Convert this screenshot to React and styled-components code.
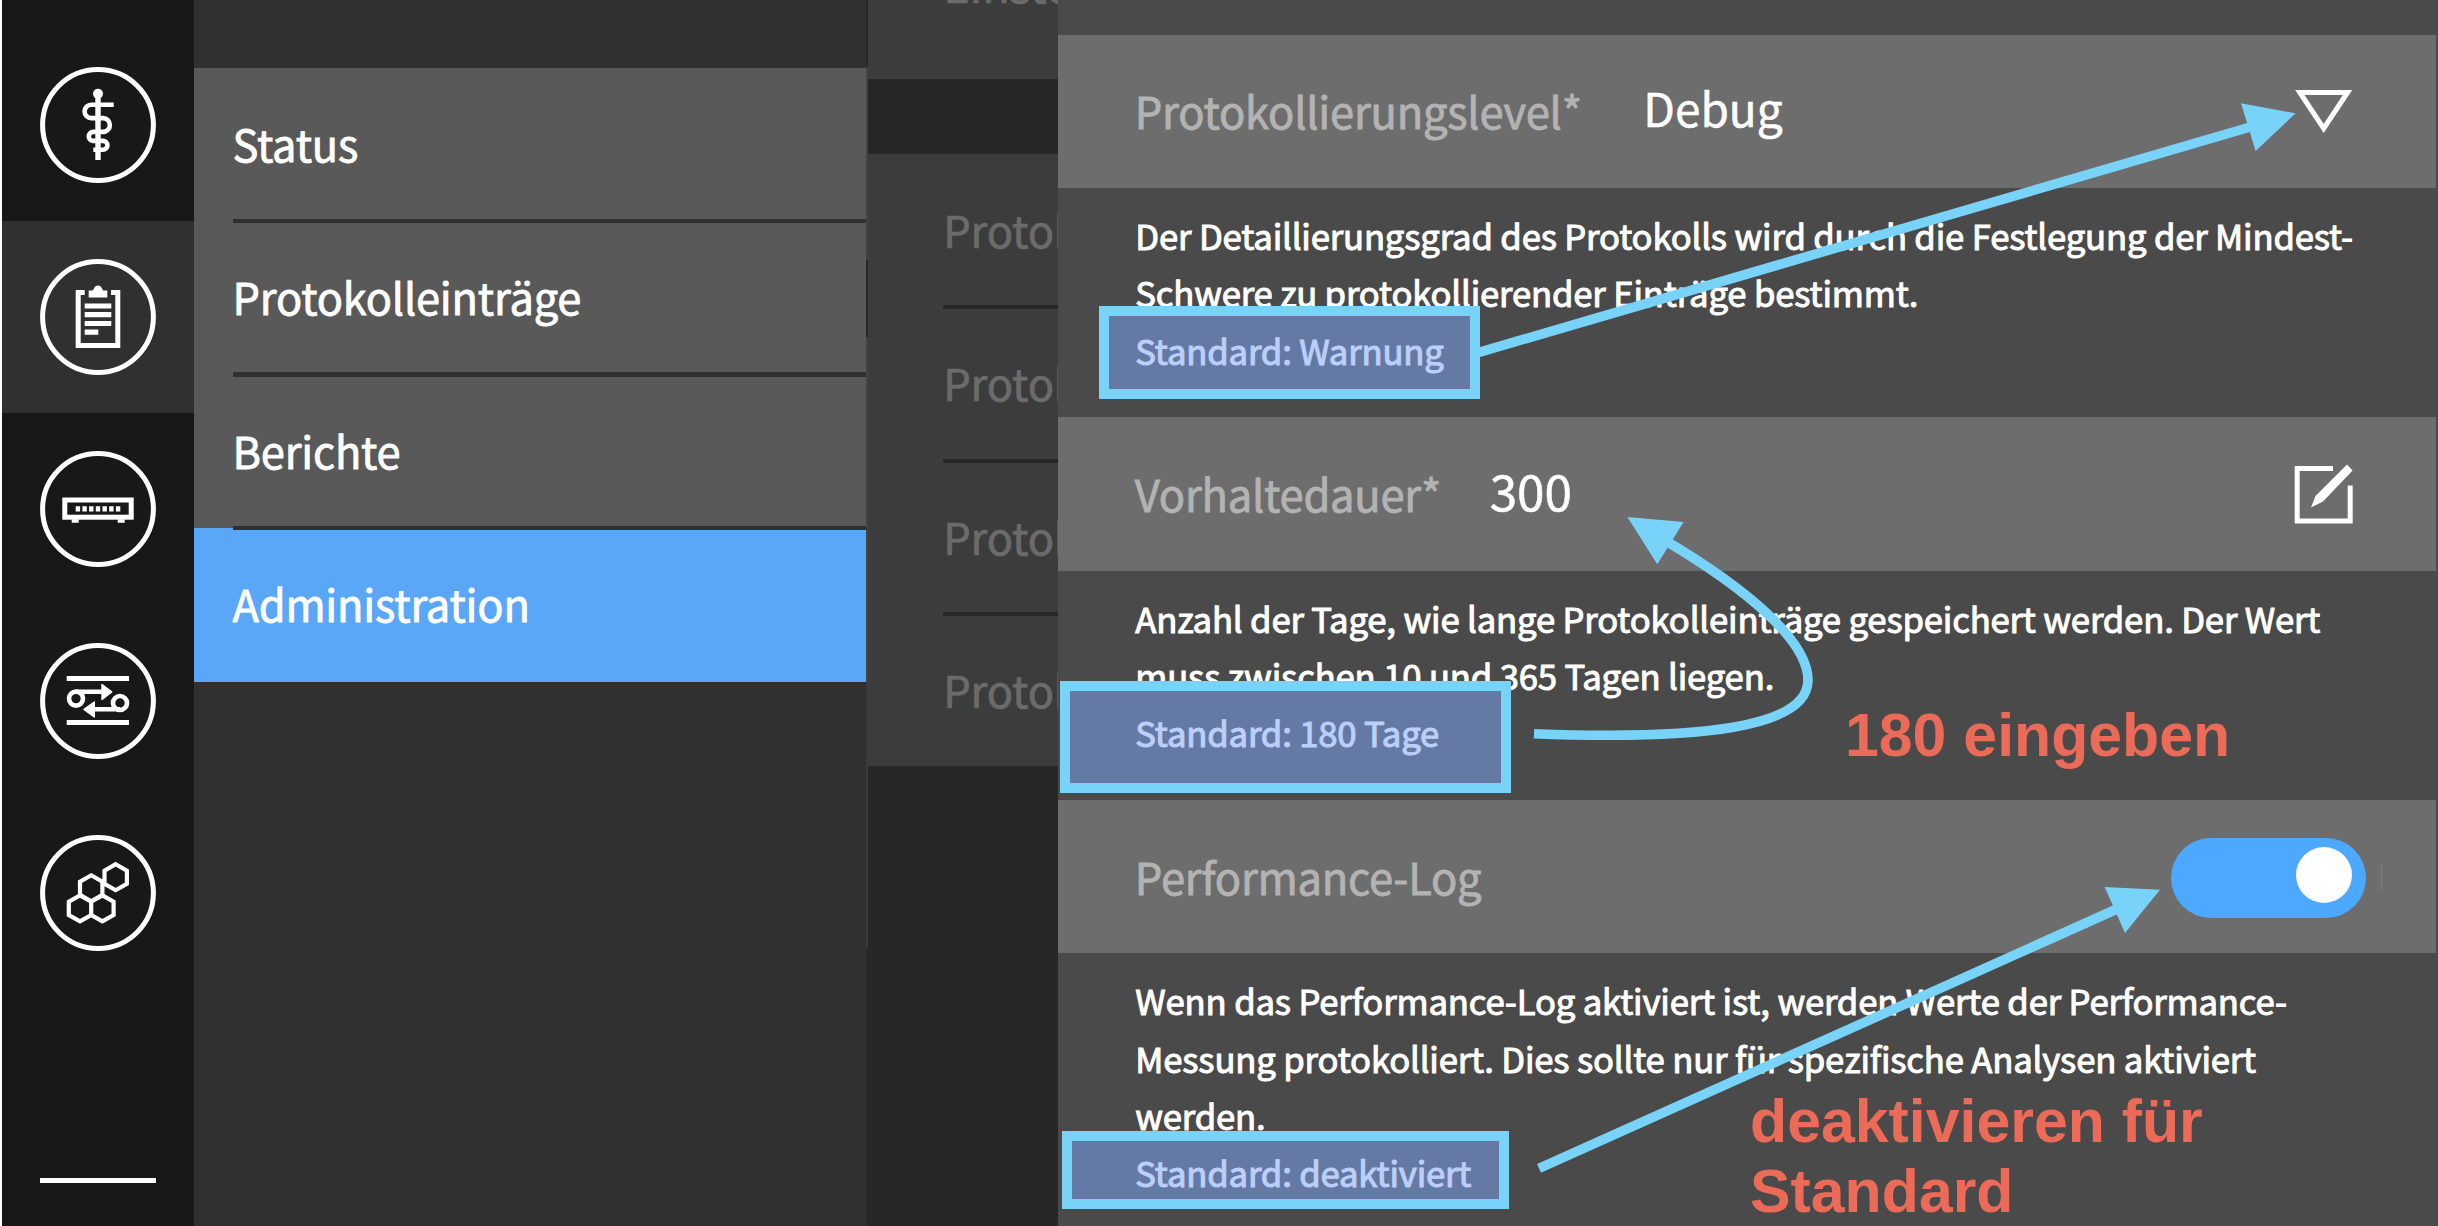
import React from "react";
import styled, { createGlobalStyle } from "styled-components";

const GlobalStyle = createGlobalStyle`
  *, *::before, *::after { box-sizing: border-box; }
  body { margin: 0; background: #fff; }
`;

const font = `"Noto Sans CJK JP", "Noto Sans CJK SC", "Noto Sans", sans-serif`;
const sky = "#79d3f9";

const Screen = styled.div`
  position: relative;
  display: flex;
  width: 2438px;
  height: 1226px;
  padding-left: 2px;
  overflow: hidden;
  background: #fff;
  font-family: ${font};
`;

const Rail = styled.nav`
  flex: none;
  display: flex;
  flex-direction: column;
  align-items: stretch;
  width: 192px;
  padding-top: 29.6px;
  background: #181818;
`;

const RailButton = styled.div`
  flex: none;
  display: flex;
  align-items: center;
  justify-content: center;
  height: 191.8px;
  background: ${(p) => (p.$active ? "#303030" : "transparent")};
`;

const RailIcon = styled.svg`
  display: block;
  width: 116px;
  height: 116px;
  fill: none;
  stroke: #fff;
  stroke-width: 4.6;
`;

const RailRule = styled.div`
  width: 116px;
  height: 5px;
  margin: 189.4px auto 0;
  background: #fff;
`;

const Menu = styled.aside`
  flex: none;
  width: 671.5px;
  padding-top: 67.5px;
  background: #303030;
`;

const MenuItem = styled.div`
  position: relative;
  height: 153.5px;
  padding: 0 0 0 38.5px;
  background: ${(p) => (p.$active ? "#5aa7f7" : "#595959")};
  color: #fff;
  font-size: 43.4px;
  line-height: 151px;
  letter-spacing: -0.2px;
  -webkit-text-stroke: 0.8px #fff;

  &:not(:first-child)::before {
    content: "";
    position: absolute;
    left: 38.5px;
    right: 0;
    top: -2.3px;
    height: 4.6px;
    background: #303030;
  }
`;

const Gutter = styled.div`
  flex: none;
  width: 2.8px;
  background: linear-gradient(#272727 0 67px, #434343 67px 260px, #272727 260px 337px, #434343 337px 682px, #3a3a3a 682px 948px, #272727 948px);
`;

const Backdrop = styled.section`
  flex: none;
  width: 190px;
  background: #272727;
  overflow: hidden;
`;

const BackdropTitle = styled.div`
  display: flow-root;
  height: 78.5px;
  padding-left: 75px;
  background: #3c3c3c;
  color: #6b6b6b;
  font-size: 45px;
  line-height: 66px;
  white-space: nowrap;
  -webkit-text-stroke: 0.7px #6b6b6b;

  span {
    display: block;
    margin-top: -48.6px;
  }
`;

const BackdropList = styled.div`
  margin-top: 75.5px;
  height: 612px;
  padding-left: 75px;
  background: #3c3c3c;
`;

const BackdropRow = styled.div`
  position: relative;
  height: 153.4px;
  color: #6b6b6b;
  font-size: 43.5px;
  line-height: 152px;
  letter-spacing: -0.22px;
  white-space: nowrap;
  -webkit-text-stroke: 0.7px #6b6b6b;

  &:not(:first-child)::before {
    content: "";
    position: absolute;
    left: 0;
    right: 0;
    top: -2px;
    height: 4px;
    background: #272727;
  }
`;

const Panel = styled.main`
  flex: 1;
  min-width: 0;
  padding: 34.7px 2px 0 0;
  background: #4a4a4a;
`;

const SettingHead = styled.header`
  display: flex;
  align-items: center;
  height: 153.4px;
  padding: 0 82px 0 76.5px;
  background: #6d6d6d;
`;

const Label = styled.div`
  color: #b3b3b3;
  font-size: 43.5px;
  line-height: 64px;
  letter-spacing: -0.25px;
  -webkit-text-stroke: 0.8px #b3b3b3;
  white-space: nowrap;
`;

const Value = styled.div`
  flex: 1;
  margin-left: ${(p) => p.$gap}px;
  color: #fff;
  font-size: ${(p) => p.$size}px;
  line-height: ${(p) => p.$line}px;
  height: 153.4px;
  white-space: nowrap;
  -webkit-text-stroke: 0.5px #fff;
`;

const Help = styled.div`
  height: 229.3px;
  padding: 18.8px 0 0 77px;
  color: #fff;
  font-size: 34.7px;
  line-height: 57.4px;
  letter-spacing: -0.18px;
  -webkit-text-stroke: 1px #fff;
`;

const HelpLine = styled.div`
  white-space: nowrap;
`;

const HeadIcon = styled.svg`
  flex: none;
  display: block;
  width: 60px;
  height: 60px;
`;

const Toggle = styled.div`
  flex: none;
  width: 195px;
  height: 80px;
  margin: 2px -12px 0 auto;
  padding: 9px 14px 0 0;
  display: flex;
  justify-content: flex-end;
  border-radius: 40px;
  background: #4da8ff;
`;

const Knob = styled.div`
  width: 56px;
  height: 56px;
  border-radius: 50%;
  background: #fff;
`;

const Sliver = styled.i`
  width: 1px;
  height: 26px;
  margin: 0 -28px 0 27px;
  background: #5a8fc6;
  opacity: 0.8;
`;

const Marker = styled.div`
  position: absolute;
  left: ${(p) => p.$x}px;
  top: ${(p) => p.$y}px;
  width: ${(p) => p.$w}px;
  height: ${(p) => p.$h}px;
  background: rgba(127, 164, 248, 0.53);
  background-clip: padding-box;
  border: 10px solid ${sky};
`;

const Arrows = styled.svg`
  position: absolute;
  left: 0;
  top: 0;
  width: 2438px;
  height: 1226px;
  pointer-events: none;
`;

const Note = styled.div`
  position: absolute;
  left: ${(p) => p.$x}px;
  top: ${(p) => p.$y}px;
  color: #ec6b58;
  font: bold 60.8px/70px "Liberation Sans", Arial, sans-serif;
  white-space: nowrap;
`;

const Ring = () => <circle cx="58" cy="58" r="55.4" strokeWidth="5" />;

const hex = (x, y) =>
  `M${x} ${y - 13}L${x + 11.2} ${y - 6.6}V${y + 6.6}L${x} ${y + 13}L${x - 11.2} ${y + 6.6}V${y - 6.6}Z`;

const StaffIcon = () => (
  <RailIcon viewBox="0 0 116 116">
    <Ring />
    <circle cx="58" cy="26.7" r="5" fill="#fff" stroke="none" />
    <path d="M58 27V93" strokeWidth="5.4" />
    <path d="M73.7 37.7H51.3a6.7 6.7 0 0 0 0 13.4H63a6.9 6.9 0 0 1 0 13.8H53.3a4.5 4.5 0 0 0 0 9H63a4.4 4.4 0 0 1 0 8.8H53.3" strokeWidth="4.6" />
  </RailIcon>
);

const ClipboardIcon = () => (
  <RailIcon viewBox="0 0 116 116">
    <Ring />
    <path d="M44.7 33.4H38.2V86.4H77.8V33.4H71" strokeWidth="5" />
    <path d="M48.7 38.5V31.5H52.5C54 31 54 26.6 58 26.6S62 31 63.5 31.5H67.3V38.5Z" fill="#fff" stroke="none" />
    <path d="M44.7 47H71.3M44.7 55.7H71.3M44.7 64.5H71.3M44.7 73.2H58.3" strokeWidth="5.2" />
  </RailIcon>
);

const DeviceIcon = () => (
  <RailIcon viewBox="0 0 116 116">
    <Ring />
    <rect x="24.8" y="49" width="66.4" height="17.2" strokeWidth="5" />
    <path d="M31.7 70H38.7M77.7 70H84.7" strokeWidth="3.4" />
    <path d="M35.7 57.9H81" strokeWidth="5.2" strokeDasharray="4.4 2.3" />
  </RailIcon>
);

const ExchangeIcon = () => (
  <RailIcon viewBox="0 0 116 116">
    <Ring />
    <path d="M26.7 35.6H89M26.7 79.6H89" strokeWidth="5" />
    <circle cx="36" cy="55.6" r="7" />
    <circle cx="80" cy="60" r="7" />
    <path d="M36 48.8H66M80 66.2H50" strokeWidth="4.6" />
    <path d="M62 41.5V56.5L71.7 48.9ZM54.3 59V74L44 66.4Z" fill="#fff" strokeWidth="1.4" strokeLinejoin="round" />
  </RailIcon>
);

const CombIcon = () => (
  <RailIcon viewBox="0 0 116 116">
    <Ring />
    <path d={[hex(75.7, 42.2), hex(51.2, 53.3), hex(40, 73.4), hex(62.4, 73.4)].join("")} strokeWidth="4.2" />
  </RailIcon>
);

const rail = [
  { icon: StaffIcon },
  { icon: ClipboardIcon, active: true },
  { icon: DeviceIcon },
  { icon: ExchangeIcon },
  { icon: CombIcon },
];

const menu = [
  { text: "Status" },
  { text: "Protokolleinträge" },
  { text: "Berichte" },
  { text: "Administration", active: true },
];

export default function App() {
  return (
    <>
      <GlobalStyle />
      <Screen lang="de">
        <Rail>
          {rail.map(({ icon: Icon, active }, i) => (
            <RailButton key={i} $active={active}>
              <Icon />
            </RailButton>
          ))}
          <RailRule />
        </Rail>

        <Menu>
          {menu.map((m) => (
            <MenuItem key={m.text} $active={m.active}>
              {m.text}
            </MenuItem>
          ))}
        </Menu>

        <Gutter />

        <Backdrop>
          <BackdropTitle>
            <span>Einstellungen</span>
          </BackdropTitle>
          <BackdropList>
            {[0, 1, 2, 3].map((i) => (
              <BackdropRow key={i}>Protokoll</BackdropRow>
            ))}
          </BackdropList>
        </Backdrop>

        <Panel>
          <SettingHead>
            <Label>Protokollierungslevel*</Label>
            <Value $gap={61.5} $size={46} $line={144}>Debug</Value>
            <HeadIcon viewBox="0 0 60 60">
              <path d="M5.8 11.5H53.6L29.7 47.5Z" fill="none" stroke="#fff" strokeWidth="5" />
            </HeadIcon>
          </SettingHead>
          <Help>
            <HelpLine>Der Detaillierungsgrad des Protokolls wird durch die Festlegung der Mindest-</HelpLine>
            <HelpLine>Schwere zu protokollierender Einträge bestimmt.</HelpLine>
            <HelpLine>Standard: Warnung</HelpLine>
          </Help>

          <SettingHead>
            <Label>Vorhaltedauer*</Label>
            <Value $gap={48.6} $size={49.4} $line={146}>300</Value>
            <HeadIcon viewBox="0 0 60 60">
              <path d="M39 4.5H3.2V57H56.2V21.5" fill="none" stroke="#fff" strokeWidth="5" />
              <path d="M17 43.5L21.5 32L53 0.5L58.6 6.6L29 37.5Z" fill="#fff" />
            </HeadIcon>
          </SettingHead>
          <Help>
            <HelpLine>Anzahl der Tage, wie lange Protokolleinträge gespeichert werden. Der Wert</HelpLine>
            <HelpLine>muss zwischen 10 und 365 Tagen liegen.</HelpLine>
            <HelpLine>Standard: 180 Tage</HelpLine>
          </Help>

          <SettingHead>
            <Label>Performance-Log</Label>
            <Toggle role="switch" aria-checked="true">
              <Knob />
            </Toggle>
            <Sliver />
          </SettingHead>
          <Help>
            <HelpLine>Wenn das Performance-Log aktiviert ist, werden Werte der Performance-</HelpLine>
            <HelpLine>Messung protokolliert. Dies sollte nur für spezifische Analysen aktiviert</HelpLine>
            <HelpLine>werden.</HelpLine>
            <HelpLine>Standard: deaktiviert</HelpLine>
          </Help>
        </Panel>

        <Marker $x={1099} $y={306} $w={381} $h={93} />
        <Marker $x={1060} $y={681} $w={451} $h={112} />
        <Marker $x={1062} $y={1131} $w={447} $h={78} />

        <Arrows viewBox="0 0 2438 1226">
          <g fill="none" stroke={sky} strokeWidth="9.6">
            <path d="M1479 352.3L2252 126.5" />
            <path d="M1534 733.7C1700 740 1808 728 1808 680C1808 640 1745 588 1666 541" />
            <path d="M1539 1168.3L2117 909" />
          </g>
          <g fill={sky}>
            <path d="M2241 103.3L2295.6 113.3L2255.6 151Z" />
            <path d="M1627.4 517L1683.7 522L1657.3 564.3Z" />
            <path d="M2104.7 887L2160 889.7L2125 933Z" />
          </g>
        </Arrows>

        <Note $x={1845} $y={700}>180 eingeben</Note>
        <Note $x={1750} $y={1086}>
          deaktivieren für
          <br />
          Standard
        </Note>
      </Screen>
    </>
  );
}
